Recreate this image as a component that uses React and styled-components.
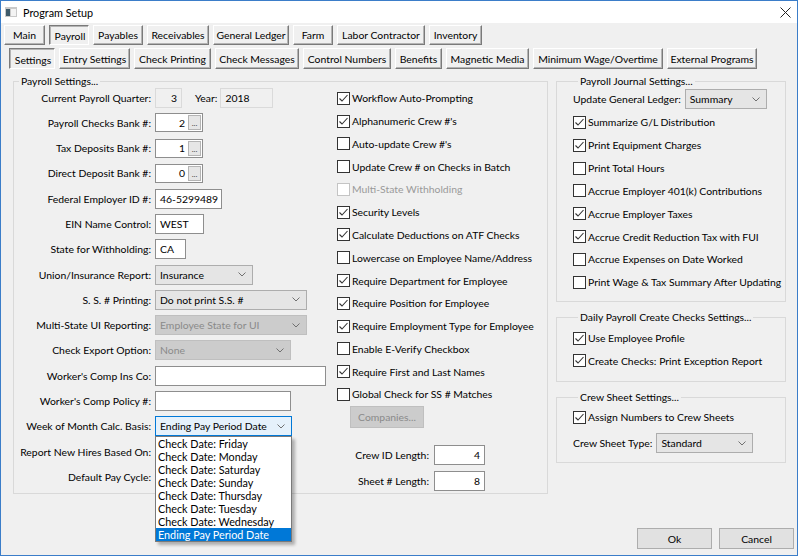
import React from "react";
import styled, { createGlobalStyle, css } from "styled-components";

const GlobalStyle = createGlobalStyle`
  html, body { margin: 0; padding: 0; background: #fff; }
  body {
    font-family: Lato, "Noto Sans", sans-serif;
    font-size: 10.4px;
    color: #000;
  }
  * { box-sizing: border-box; }
`;

const Window = styled.div`
  width: 798px;
  height: 556px;
  border: 1px solid #3b7dc9;
  background: #f0f0f0;
  display: flex;
  flex-direction: column;
`;

const TitleBar = styled.div`
  height: 22px;
  flex-shrink: 0;
  background: #fff;
  display: flex;
  align-items: center;
  padding: 0 6px 0 4px;
  gap: 6px;
  font-size: 10.8px;
`;

const Title = styled.span`
  flex: 1;
`;

const TabRow = styled.div`
  display: flex;
  gap: 4px;
  height: ${(p) => p.$h}px;
  margin-top: ${(p) => p.$top}px;
  padding-left: ${(p) => p.$indent}px;
  flex-shrink: 0;
`;

const Tab = styled.div`
  width: ${(p) => p.$w}px;
  height: 100%;
  display: flex;
  align-items: center;
  justify-content: center;
  white-space: nowrap;
  background: #f0f0f0;
  border: 1px solid;
  border-color: #fff #7a7a7a #7a7a7a #fff;
  box-shadow: inset -1px -1px 0 #b4b4b4;
  ${(p) =>
    p.$active &&
    css`
      border-color: #7a7a7a #fff #fff #7a7a7a;
      box-shadow: inset 1px 1px 0 #b4b4b4;
      padding-top: 2px;
      padding-left: 2px;
    `}
`;

const Content = styled.div`
  display: flex;
  gap: 8px;
  margin-top: 6px;
  padding-left: 12px;
`;

const Group = styled.fieldset`
  margin: 0;
  min-width: 0;
  width: ${(p) => p.$w}px;
  height: ${(p) => p.$h}px;
  padding: ${(p) => p.$pad};
  border: 1px solid #d9d9d9;
`;

const Legend = styled.legend`
  margin-left: 5px;
  padding: 0 2px;
  line-height: 12px;
`;

const GroupBody = styled.div`
  display: flex;
`;

const FieldGrid = styled.div`
  display: grid;
  grid-template-columns: 137px auto;
  column-gap: 4px;
  grid-auto-rows: 21px;
  row-gap: 4.3px;
  align-items: center;
  width: 323px;
`;

const Label = styled.span`
  text-align: right;
  white-space: nowrap;
`;

const Inline = styled.div`
  position: relative;
  display: flex;
  align-items: center;
  gap: ${(p) => p.$gap || 0}px;
`;

const TextBox = styled.div`
  width: ${(p) => p.$w}px;
  height: ${(p) => p.$h || 20}px;
  display: flex;
  align-items: center;
  justify-content: ${(p) => (p.$right ? "flex-end" : "flex-start")};
  padding: 0 4px;
  background: ${(p) => (p.$readOnly ? "#f0f0f0" : "#fff")};
  border: 1px solid ${(p) => (p.$readOnly ? "#dadada" : "#8e8e8e")};
  white-space: nowrap;
`;

const BankBox = styled.div`
  width: 48px;
  height: 19px;
  display: flex;
  align-items: center;
  background: #fff;
  border: 1px solid #8e8e8e;
`;

const BankValue = styled.span`
  flex: 1;
  text-align: right;
  padding-right: 3px;
`;

const DotsButton = styled.span`
  width: 13px;
  height: 15px;
  margin-right: 1px;
  display: flex;
  align-items: flex-end;
  justify-content: center;
  font-size: 8px;
  line-height: 11px;
  background: #e6e6e6;
  border: 1px solid #b4b4b4;
  color: #444;
`;

const SelectBox = styled.div`
  width: ${(p) => p.$w}px;
  height: 20px;
  display: flex;
  align-items: center;
  justify-content: space-between;
  padding: 0 6px 0 4px;
  background: #e5e5e5;
  border: 1px solid #adadad;
  white-space: nowrap;
  ${(p) =>
    p.$disabled &&
    css`
      background: #cccccc;
      border-color: #bfbfbf;
      color: #8a8a8a;
    `}
  ${(p) =>
    p.$focused &&
    css`
      background: #e5f1fb;
      border-color: #0078d7;
    `}
`;

const DropList = styled.div`
  position: absolute;
  top: 100%;
  left: 0;
  width: 137px;
  background: #fff;
  border: 1px solid #7a7a7a;
  box-shadow: 3px 3px 3px rgba(0, 0, 0, 0.28);
  z-index: 5;
  display: flex;
  flex-direction: column;
`;

const DropItem = styled.div`
  height: 13px;
  line-height: 13px;
  padding-left: 2px;
  white-space: nowrap;
  font-size: 10.8px;
  ${(p) =>
    p.$selected &&
    css`
      background: #0078d7;
      color: #fff;
    `}
`;

const CheckColumn = styled.div`
  display: flex;
  flex-direction: column;
  width: 209px;
`;

const CheckList = styled.div`
  display: grid;
  grid-auto-rows: ${(p) => p.$row}px;
  align-items: center;
`;

const CheckRow = styled.label`
  display: flex;
  align-items: center;
  gap: 2px;
  white-space: nowrap;
  color: ${(p) => (p.$disabled ? "#9a9a9a" : "#000")};
`;

const Box = styled.span`
  width: 13px;
  height: 13px;
  flex-shrink: 0;
  display: flex;
  align-items: center;
  justify-content: center;
  background: #fff;
  border: 1px solid ${(p) => (p.$disabled ? "#c4c4c4" : "#333")};
`;

const PushButton = styled.div`
  width: ${(p) => p.$w}px;
  height: ${(p) => p.$h}px;
  display: flex;
  align-items: center;
  justify-content: center;
  background: #e1e1e1;
  border: 1px solid #adadad;
  ${(p) =>
    p.$disabled &&
    css`
      background: #cccccc;
      border-color: #bfbfbf;
      color: #8a8a8a;
    `}
`;

const CompaniesWrap = styled.div`
  padding-left: 13px;
`;

const LengthGrid = styled.div`
  display: grid;
  grid-template-columns: 92px 51px;
  column-gap: 5px;
  grid-auto-rows: 20px;
  row-gap: 6px;
  align-items: center;
  margin-top: 17px;
`;

const RightColumn = styled.div`
  display: flex;
  flex-direction: column;
  gap: 9px;
`;

const LedgerRow = styled.div`
  display: flex;
  align-items: center;
  gap: 4px;
`;

const Footer = styled.div`
  margin-top: auto;
  display: flex;
  justify-content: flex-end;
  gap: 7px;
  padding: 0 3px 6px 0;
`;

const Chevron = () => (
  <svg width="8" height="5" viewBox="0 0 8 5">
    <polyline points="0.5,0.5 4,4 7.5,0.5" fill="none" stroke="#707070" strokeWidth="1" />
  </svg>
);

const Select = ({ w, value, disabled, focused }) => (
  <SelectBox $w={w} $disabled={disabled} $focused={focused}>
    <span>{value}</span>
    <Chevron />
  </SelectBox>
);

const Check = ({ checked, disabled, children }) => (
  <CheckRow $disabled={disabled}>
    <Box $disabled={disabled}>
      {checked && (
        <svg width="11" height="11" viewBox="0 0 11 11">
          <polyline points="1.5,5.5 4,8 9.5,2" fill="none" stroke="#333" strokeWidth="1.1" />
        </svg>
      )}
    </Box>
    <span>{children}</span>
  </CheckRow>
);

const AppIcon = () => (
  <svg width="12" height="10" viewBox="0 0 12 10">
    <rect x="0" y="0" width="12" height="10" fill="#c9c9c9" />
    <rect x="1" y="2" width="4" height="7" fill="#3f5b6b" />
    <rect x="6" y="2" width="5" height="7" fill="#f4f4f4" />
  </svg>
);

const CloseIcon = () => (
  <svg width="11" height="11" viewBox="0 0 11 11">
    <path d="M0.5 0.5 L10.5 10.5 M10.5 0.5 L0.5 10.5" stroke="#222" strokeWidth="1" />
  </svg>
);

const mainTabs = [
  ["Main", 41],
  ["Payroll", 40, true],
  ["Payables", 50],
  ["Receivables", 62],
  ["General Ledger", 76],
  ["Farm", 40],
  ["Labor Contractor", 88],
  ["Inventory", 53],
];

const subTabs = [
  ["Settings", 46, true],
  ["Entry Settings", 71],
  ["Check Printing", 77],
  ["Check Messages", 84],
  ["Control Numbers", 88],
  ["Benefits", 47],
  ["Magnetic Media", 83],
  ["Minimum Wage/Overtime", 130],
  ["External Programs", 90],
];

const weekOptions = [
  "Check Date: Friday",
  "Check Date: Monday",
  "Check Date: Saturday",
  "Check Date: Sunday",
  "Check Date: Thursday",
  "Check Date: Tuesday",
  "Check Date: Wednesday",
  "Ending Pay Period Date",
];

const payrollChecks = [
  ["Workflow Auto-Prompting", true],
  ["Alphanumeric Crew #'s", true],
  ["Auto-update Crew #'s", false],
  ["Update Crew # on Checks in Batch", false],
  ["Multi-State Withholding", false, true],
  ["Security Levels", true],
  ["Calculate Deductions on ATF Checks", true],
  ["Lowercase on Employee Name/Address", false],
  ["Require Department for Employee", true],
  ["Require Position for Employee", true],
  ["Require Employment Type for Employee", true],
  ["Enable E-Verify Checkbox", false],
  ["Require First and Last Names", true],
  ["Global Check for SS # Matches", false],
];

const journalChecks = [
  ["Summarize G/L Distribution", true],
  ["Print Equipment Charges", true],
  ["Print Total Hours", false],
  ["Accrue Employer 401(k) Contributions", false],
  ["Accrue Employer Taxes", true],
  ["Accrue Credit Reduction Tax with FUI", true],
  ["Accrue Expenses on Date Worked", false],
  ["Print Wage & Tax Summary After Updating", false],
];

const Bank = ({ value }) => (
  <BankBox>
    <BankValue>{value}</BankValue>
    <DotsButton>...</DotsButton>
  </BankBox>
);

export default function App() {
  return (
    <>
      <GlobalStyle />
      <Window>
        <TitleBar>
          <AppIcon />
          <Title>Program Setup</Title>
          <CloseIcon />
        </TitleBar>

        <TabRow $h={20} $top={2} $indent={3}>
          {mainTabs.map(([t, w, a]) => (
            <Tab key={t} $w={w} $active={a}>
              {t}
            </Tab>
          ))}
        </TabRow>
        <TabRow $h={21} $top={3} $indent={8}>
          {subTabs.map(([t, w, a]) => (
            <Tab key={t} $w={w} $active={a}>
              {t}
            </Tab>
          ))}
        </TabRow>

        <Content>
          <Group $w={535} $h={419} $pad="0">
            <Legend>Payroll Settings...</Legend>
            <GroupBody>
              <FieldGrid>
                <Label>Current Payroll Quarter:</Label>
                <Inline $gap={13}>
                  <TextBox $w={27} $readOnly $right>3</TextBox>
                  <Inline $gap={3}>
                    <span>Year:</span>
                    <TextBox $w={53} $readOnly>2018</TextBox>
                  </Inline>
                </Inline>

                <Label>Payroll Checks Bank #:</Label>
                <Inline><Bank value="2" /></Inline>
                <Label>Tax Deposits Bank #:</Label>
                <Inline><Bank value="1" /></Inline>
                <Label>Direct Deposit Bank #:</Label>
                <Inline><Bank value="0" /></Inline>

                <Label>Federal Employer ID #:</Label>
                <Inline><TextBox $w={67}>46-5299489</TextBox></Inline>
                <Label>EIN Name Control:</Label>
                <Inline><TextBox $w={49}>WEST</TextBox></Inline>
                <Label>State for Withholding:</Label>
                <Inline><TextBox $w={31}>CA</TextBox></Inline>

                <Label>Union/Insurance Report:</Label>
                <Inline><Select w={98} value="Insurance" /></Inline>
                <Label>S. S. # Printing:</Label>
                <Inline><Select w={152} value="Do not print S.S. #" /></Inline>
                <Label>Multi-State UI Reporting:</Label>
                <Inline><Select w={152} value="Employee State for UI" disabled /></Inline>
                <Label>Check Export Option:</Label>
                <Inline><Select w={136} value="None" disabled /></Inline>

                <Label>Worker's Comp Ins Co:</Label>
                <Inline><TextBox $w={171} /></Inline>
                <Label>Worker's Comp Policy #:</Label>
                <Inline><TextBox $w={136} /></Inline>

                <Label>Week of Month Calc. Basis:</Label>
                <Inline>
                  <Select w={137} value="Ending Pay Period Date" focused />
                  <DropList>
                    {weekOptions.map((o) => (
                      <DropItem key={o} $selected={o === "Ending Pay Period Date"}>
                        {o}
                      </DropItem>
                    ))}
                  </DropList>
                </Inline>
                <Label>Report New Hires Based On:</Label>
                <Inline><Select w={137} value="" /></Inline>
                <Label>Default Pay Cycle:</Label>
                <Inline><Select w={137} value="" /></Inline>
              </FieldGrid>

              <CheckColumn>
                <CheckList $row={22.77}>
                  {payrollChecks.map(([t, c, d]) => (
                    <Check key={t} checked={c} disabled={d}>
                      {t}
                    </Check>
                  ))}
                </CheckList>
                <CompaniesWrap>
                  <PushButton $w={74} $h={22} $disabled>
                    Companies...
                  </PushButton>
                </CompaniesWrap>
                <LengthGrid>
                  <Label>Crew ID Length:</Label>
                  <TextBox $w={51} $right>4</TextBox>
                  <Label>Sheet # Length:</Label>
                  <TextBox $w={51} $right>8</TextBox>
                </LengthGrid>
              </CheckColumn>
            </GroupBody>
          </Group>

          <RightColumn>
            <Group $w={230} $h={227} $pad="1px 0 0 16px">
              <Legend>Payroll Journal Settings...</Legend>
              <CheckList $row={22.86}>
                <LedgerRow>
                  <span>Update General Ledger:</span>
                  <Select w={82} value="Summary" />
                </LedgerRow>
                {journalChecks.map(([t, c]) => (
                  <Check key={t} checked={c}>
                    {t}
                  </Check>
                ))}
              </CheckList>
            </Group>

            <Group $w={230} $h={71} $pad="3.75px 0 0 16px">
              <Legend>Daily Payroll Create Checks Settings...</Legend>
              <CheckList $row={22.5}>
                <Check checked>Use Employee Profile</Check>
                <Check checked>Create Checks: Print Exception Report</Check>
              </CheckList>
            </Group>

            <Group $w={230} $h={72} $pad="1px 0 0 16px">
              <Legend>Crew Sheet Settings...</Legend>
              <CheckList $row={26}>
                <Check checked>Assign Numbers to Crew Sheets</Check>
                <LedgerRow>
                  <span>Crew Sheet Type:</span>
                  <Select w={97} value="Standard" />
                </LedgerRow>
              </CheckList>
            </Group>
          </RightColumn>
        </Content>

        <Footer>
          <PushButton $w={75} $h={21}>Ok</PushButton>
          <PushButton $w={75} $h={21}>Cancel</PushButton>
        </Footer>
      </Window>
    </>
  );
}
